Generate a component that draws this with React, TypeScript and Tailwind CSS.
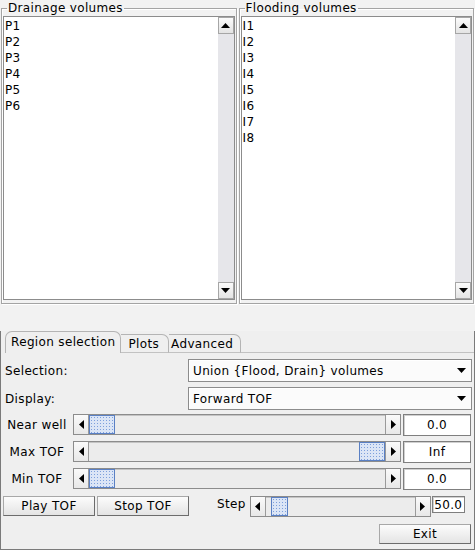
import React from "react";
import clsx from "clsx";

const drainage = ["P1", "P2", "P3", "P4", "P5", "P6"];
const flooding = ["I1", "I2", "I3", "I4", "I5", "I6", "I7", "I8"];

type Dir = "up" | "down" | "left" | "right";

function Arrow({ dir }: { dir: Dir }) {
  const vertical = dir === "up" || dir === "down";
  const pts = {
    up: "0,5 4.5,0 9,5",
    down: "0,0 9,0 4.5,5",
    left: "5,0 5,9 0,4.5",
    right: "0,0 0,9 5,4.5",
  }[dir];
  const w = vertical ? 9 : 5;
  const h = vertical ? 5 : 9;
  return (
    <svg width={w} height={h} viewBox={`0 0 ${w} ${h}`}>
      <polygon points={pts} fill="#000" />
    </svg>
  );
}

function ScrollButton({ dir }: { dir: Dir }) {
  return (
    <div className="flex h-[17px] items-center justify-center border border-[#a6a6a6] bg-gradient-to-b from-[#fbfbfb] to-[#e4e4e4]">
      <Arrow dir={dir} />
    </div>
  );
}

function VolumeList({ title, items }: { title: string; items: string[] }) {
  return (
    <fieldset className="h-[303px] w-[236px] min-w-0 border border-[#a4a4a4] px-[1px] pb-[1px] shadow-[inset_1px_1px_0_#fff,1px_1px_0_#fff]">
      <legend className="ml-[4px] px-[1px] leading-[15px]">{title}</legend>
      <div className="flex h-[284px] border border-[#8c8c8c] bg-white">
        <div className="flex-1 pl-[1px] pt-[1px]">
          {items.map((item) => (
            <div key={item} className="h-[16px] leading-[16px]">
              {item}
            </div>
          ))}
        </div>
        <div className="flex w-[16px] flex-col bg-[#e6e6ea]">
          <ScrollButton dir="up" />
          <div className="flex-1" />
          <ScrollButton dir="down" />
        </div>
      </div>
    </fieldset>
  );
}

function ArrowBtn({ dir }: { dir: Dir }) {
  return (
    <div
      className={clsx(
        "flex w-[15px] items-center justify-center bg-gradient-to-b from-[#fafafa] to-[#e8e8e8]",
        dir === "left" ? "border-r border-[#9a9a9a]" : "border-l border-[#9a9a9a]"
      )}
    >
      <Arrow dir={dir} />
    </div>
  );
}

function Scale({
  className,
  value,
  thumbWidth = 26,
  gapLeft = 0,
}: {
  className?: string;
  value: number;
  thumbWidth?: number;
  gapLeft?: number;
}) {
  return (
    <div className={clsx("flex h-[21px] border border-[#8c8c8c] bg-[#ececec]", className)}>
      <ArrowBtn dir="left" />
      <div className="relative flex-1 shadow-[inset_0_1px_0_#c4c4c4]">
        <div
          className="absolute top-0 bottom-0 border border-[#5a80c4] bg-[#dbe5f6] bg-[radial-gradient(circle,#7c9fdc_0.7px,transparent_0.9px)] bg-[length:3px_3px]"
          style={{
            left: `calc(${gapLeft}px + (100% - ${thumbWidth + gapLeft}px) * ${value})`,
            width: thumbWidth,
          }}
        />
      </div>
      <ArrowBtn dir="right" />
    </div>
  );
}

function ValueBox({ value, className }: { value: string; className?: string }) {
  return (
    <div
      className={clsx(
        "flex items-center justify-center border border-[#7f7f7f] bg-white shadow-[inset_1px_1px_0_#d0d0d0]",
        className
      )}
    >
      {value}
    </div>
  );
}

function Combo({ value }: { value: string }) {
  return (
    <div className="flex h-[23px] w-[284px] items-center justify-between border border-[#8c8c8c] bg-[#fbfbfb] pl-[4px] pr-[5px] shadow-[inset_1px_1px_0_#fff]">
      <span>{value}</span>
      <Arrow dir="down" />
    </div>
  );
}

function Button({ label, className }: { label: string; className?: string }) {
  return (
    <div
      className={clsx(
        "flex h-[20px] w-[92px] items-center justify-center border border-[#a8a8a8] border-r-[#6c6c6c] border-b-[#6c6c6c] bg-gradient-to-b from-[#fcfcfc] to-[#e4e4e4]",
        className
      )}
    >
      {label}
    </div>
  );
}

function ScaleRow({ label, value, pos }: { label: string; value: string; pos: number }) {
  return (
    <div className="flex h-[21px] items-center">
      <div className="w-[72px] text-center">{label}</div>
      <Scale className="w-[328px]" value={pos} />
      <ValueBox value={value} className="ml-[2px] h-[22px] w-[68px]" />
    </div>
  );
}

const tabs = [
  { label: "Region selection", cls: "h-[22px] rounded-tl-[7px] border-l px-[5px] pb-[1px]" },
  { label: "Plots", cls: "h-[19px] border-b border-b-[#c2c2c2] pl-[7px] pr-[9px]" },
  { label: "Advanced", cls: "h-[19px] border-b border-b-[#c2c2c2] pl-[2px] pr-[7px]" },
];

export default function App() {
  return (
    <div className="flex h-[550px] w-[475px] flex-col bg-[#f2f2f2] font-['DejaVu_Sans',sans-serif] text-[12px] tracking-[0.35px] text-black">
      <div className="flex h-[331px] gap-[2px] px-[1px] pt-[1px]">
        <VolumeList title="Drainage volumes" items={drainage} />
        <VolumeList title="Flooding volumes" items={flooding} />
      </div>

      <div className="flex flex-1 flex-col border-x border-b border-[#7a7a7a] bg-[#efefef]">
        <div className="flex h-[22px] items-end pl-[4px]">
          {tabs.map((t) => (
            <div
              key={t.label}
              className={clsx("flex items-center rounded-tr-[7px] border-t border-r border-[#b4b4b4]", t.cls)}
            >
              {t.label}
            </div>
          ))}
          <div className="flex-1 border-b border-[#c2c2c2]" />
        </div>

        <div className="mt-[6px] flex items-center justify-between pr-[2px] pl-[4px]">
          <span>Selection:</span>
          <Combo value="Union {Flood, Drain} volumes" />
        </div>
        <div className="mt-[5px] flex items-center justify-between pr-[2px] pl-[4px]">
          <span>Display:</span>
          <Combo value="Forward TOF" />
        </div>

        <div className="mt-[4px]">
          <ScaleRow label="Near well" value="0.0" pos={0} />
        </div>
        <div className="mt-[6px]">
          <ScaleRow label="Max TOF" value="Inf" pos={1} />
        </div>
        <div className="mt-[6px]">
          <ScaleRow label="Min TOF" value="0.0" pos={0} />
        </div>

        <div className="mt-[7px] flex items-start pl-[2px]">
          <Button label="Play TOF" />
          <Button label="Stop TOF" className="ml-[2px]" />
          <span className="ml-[28px] leading-[16px]">Step</span>
          <Scale className="ml-[4px] w-[181px]" value={0} thumbWidth={17} gapLeft={5} />
          <ValueBox value="50.0" className="ml-[1px] h-[17px] w-[33px]" />
        </div>

        <div className="mt-[7px] flex justify-end pr-[3px]">
          <Button label="Exit" />
        </div>
      </div>
    </div>
  );
}
